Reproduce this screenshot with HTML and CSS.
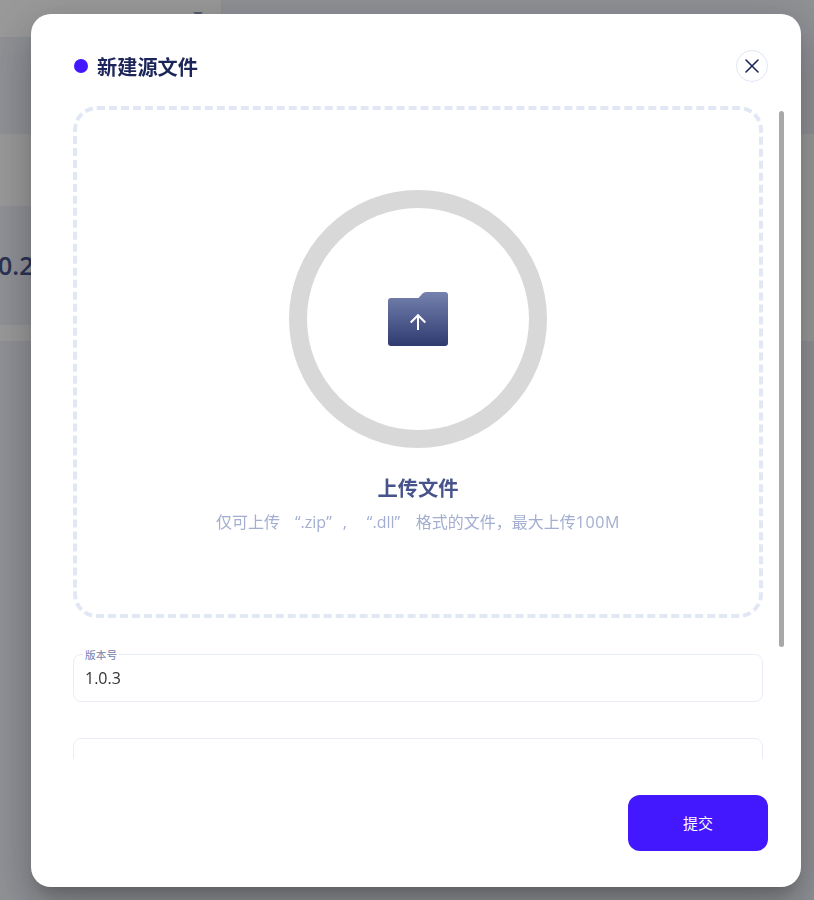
FILE: index.html
```html
<!DOCTYPE html>
<html lang="zh-CN">
<head>
<meta charset="utf-8">
<title>新建源文件</title>
<link rel="stylesheet" href="styles.css">
</head>
<body>
<div class="page">
  <div class="topbar"><span class="caret"></span></div>
  <div class="card">
    <div class="card-gap"></div>
    <div class="version">0.2</div>
  </div>
</div>
<div class="backdrop">
  <section class="dialog" role="dialog">
    <header class="dialog-head">
      <span class="dot"></span>
      <h2 class="title">新建源文件</h2>
      <button class="close" aria-label="关闭">
        <svg width="14" height="14" viewBox="0 0 14 14" fill="none" stroke="#1b2559" stroke-width="1.6" stroke-linecap="round"><path d="M1 1L13 13M13 1L1 13"/></svg>
      </button>
    </header>
    <div class="dialog-body">
      <div class="fields">
        <div class="dropzone">
          <div class="ring">
            <svg width="60" height="54" viewBox="0 0 60 54">
              <defs><linearGradient id="folder" x1="0" y1="0" x2="0" y2="1"><stop offset="0" stop-color="#7582ae"/><stop offset="1" stop-color="#2f3a70"/></linearGradient></defs>
              <path fill="url(#folder)" d="M3 6H30.500L34.500 1.500Q36 0 38 0H57Q60 0 60 3V51Q60 54 57 54H3Q0 54 0 51V9Q0 6 3 6Z"/>
              <path fill="none" stroke="#fff" stroke-width="2" d="M30 38V23.500M22.700 30.500L30 23.200L37.300 30.500"/>
            </svg>
          </div>
          <h3 class="drop-title">上传文件</h3>
          <p class="drop-hint"><span>仅可上传</span><span class="zip">“.zip”</span><span class="comma">,</span><span class="dll">“.dll”</span><span class="rest">格式的文件，最大上传<span class="size">100M</span></span></p>
        </div>
        <div class="field"><label class="label">版本号</label><span class="value">1.0.3</span></div>
        <div class="field"></div>
      </div>
      <div class="scrollbar"></div>
    </div>
    <footer class="dialog-foot"><button class="submit">提交</button></footer>
  </section>
</div>
</body>
</html>
```
FILE: styles.css
```css
* { box-sizing: border-box; }
body {
  margin: 0;
  height: 900px;
  overflow: hidden;
  background: #eef1f9;
  font-family: "Open Sans", "Noto Sans CJK SC", sans-serif;
}
h2, h3, p { margin: 0; }
button { padding: 0; font-family: inherit; }
.topbar {
  width: 222px;
  height: 38px;
  padding: 12px 0 0 193px;
  background: #fff;
  border-right: 1px solid #e9edf7;
  border-bottom: 1px solid #e9edf7;
}
.caret {
  display: block;
  width: 0;
  border: 5px solid transparent;
  border-top-color: #8f9bba;
}
.card { height: 207px; margin-top: 96px; background: #fff; }
.card-gap { height: 72px; }
.version {
  width: 700px;
  height: 119px;
  line-height: 119px;
  background: #eef1f9;
  color: #47548c;
  font-size: 25px;
  font-weight: 600;
  text-indent: -2px;
}
.backdrop {
  position: fixed;
  inset: 0;
  padding: 14px 13px 13px 31px;
  background: rgba(0, 0, 0, .4);
}
.dialog {
  display: flex;
  flex-direction: column;
  height: 873px;
  border-radius: 20px;
  background: #fff;
  box-shadow: 0 11px 15px -7px rgba(0, 0, 0, .2), 0 24px 38px 3px rgba(0, 0, 0, .14), 0 9px 46px 8px rgba(0, 0, 0, .12);
}
.dialog-head {
  display: flex;
  align-items: center;
  height: 92px;
  padding: 12px 33px 0 43px;
}
.dot { width: 14px; height: 14px; border-radius: 50%; background: #4318ff; }
.title {
  margin-left: 9px;
  padding-top: 2px;
  color: #1b2559;
  font-size: 20.2px;
  line-height: 28px;
  font-weight: 700;
}
.close {
  display: grid;
  place-items: center;
  width: 32px;
  height: 32px;
  margin-left: auto;
  border: 1px solid #e0e7f5;
  border-radius: 50%;
  background: #fff;
}
.dialog-body {
  display: flex;
  height: 653px;
  overflow: hidden;
  padding: 0 17px 0 42px;
}
.fields { width: 690px; }
.dropzone {
  display: flex;
  flex-direction: column;
  align-items: center;
  height: 512px;
  padding-top: 80px;
  border: 4px dashed #e1e7f5;
  border-radius: 24px;
}
.ring {
  display: grid;
  place-items: center;
  width: 258px;
  height: 258px;
  border: 18px solid #d8d8d8;
  border-radius: 50%;
}
.drop-title {
  margin-top: 25px;
  color: #47548c;
  font-size: 20.3px;
  line-height: 30px;
  font-weight: 700;
}
.drop-hint {
  display: flex;
  width: 404px;
  margin-top: 7px;
  color: #a3aed0;
  font-size: 16px;
  line-height: 24px;
  white-space: nowrap;
}
.zip { margin-left: 15px; }
.comma { margin-left: 11px; }
.dll { margin-left: 20px; }
.rest { margin-left: auto; }
.size { letter-spacing: .6px; }
.field {
  position: relative;
  height: 48px;
  margin-top: 36px;
  padding: 0 11px;
  border: 1px solid #e9edf7;
  border-radius: 8px;
}
.label {
  position: absolute;
  top: -8px;
  left: 9px;
  padding: 0 2px;
  background: #fff;
  color: #707eae;
  font-size: 10.7px;
  line-height: 16px;
}
.value { color: #333; font-size: 16px; line-height: 46px; }
.scrollbar {
  width: 5px;
  height: 536px;
  margin: 5px 0 0 auto;
  border-radius: 3px;
  background: #a8a8a8;
}
.dialog-foot { display: flex; justify-content: flex-end; padding: 36px 33px 0; }
.submit {
  width: 140px;
  height: 56px;
  padding-bottom: 2px;
  border: 0;
  border-radius: 12px;
  background: #4318ff;
  color: #fff;
  font-size: 15px;
  font-weight: 400;
}
```
